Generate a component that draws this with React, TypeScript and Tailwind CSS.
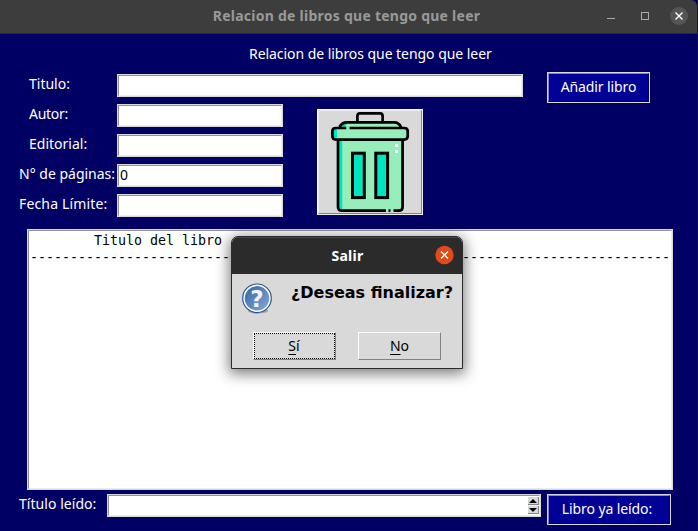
import type { ReactNode } from "react";

const SANS = "font-['Noto_Sans','DejaVu_Sans',sans-serif]";

function Entry({ className, children }: { className: string; children?: ReactNode }) {
  return (
    <div className={`h-[23px] shrink-0 border border-[#d9d9d9] ${className}`}>
      <div className="flex h-full border border-t-[#929292] border-l-[#929292] border-r-[#ececec] border-b-[#ececec] bg-white text-black">
        {children}
      </div>
    </div>
  );
}

function NavyButton({ className, children }: { className: string; children: ReactNode }) {
  return (
    <button className={`h-[31px] shrink-0 border border-[#d9d9d9] tracking-[-0.1px] ${className}`}>
      <span className="flex h-full items-center justify-center border border-t-[#8282d8] border-l-[#8282d8] border-r-[#00004d] border-b-[#00004d] bg-[#000096] pb-[2px] whitespace-nowrap">
        {children}
      </span>
    </button>
  );
}

function Field({ label, className, value }: { label: string; className: string; value?: string }) {
  return (
    <div className="flex h-[30px]">
      <div className={`w-[117px] shrink-0 leading-[20px] whitespace-nowrap ${className}`}>{label}</div>
      <Entry className="w-[166px]">
        {value && <span className="pl-px leading-[17px]">{value}</span>}
      </Entry>
    </div>
  );
}

function TrashIcon() {
  return (
    <svg width="104" height="104" viewBox="0 0 104 104" fill="none">
      <path d="M20 28H84.6V98Q84.6 100.7 81.6 100.7H23Q20 100.7 20 98Z" fill="#97eebb" />
      <path d="M20 28H24.3V100.7H23Q20 100.7 20 98Z" fill="#00e5bf" />
      <path d="M21.5 18Q24 12.3 30 12.3H75Q81 12.3 83 18Z" fill="#97eebb" />
      <path d="M21.5 18Q24 12.3 30 12.3L26.5 18Z" fill="#00e5bf" />
      <rect x="14.4" y="18" width="75.3" height="11.3" rx="3" fill="#97eebb" />
      <path d="M17.4 18H19V29.3H17.4Q14.4 29.3 14.4 26.3V21Q14.4 18 17.4 18Z" fill="#00e5bf" />
      <path
        d="M21.5 17Q24 12.3 29 12.3H76Q81 12.3 83 17M39.4 12V6Q39.4 3.3 42 3.3H62Q64.6 3.3 64.6 6V12M28.3 18H18Q14.4 18 14.4 21V26.3Q14.4 29.6 18 29.6H86Q89.7 29.6 89.7 26.3V21Q89.7 18 86 18H31.5M20 30V97Q20 100.7 24 100.7H68M75.5 100.7H81Q84.6 100.7 84.6 97V30M70.5 100.7H72.5"
        stroke="#000"
        strokeWidth="2.7"
      />
      <rect x="34.5" y="43.2" width="11.8" height="44.4" fill="#00e5bf" stroke="#000" strokeWidth="3" />
      <rect x="57.8" y="43.2" width="11.8" height="44.4" fill="#00e5bf" stroke="#000" strokeWidth="3" />
      <path d="M77 34h3v3h-3zM77 40h3v3h-3z" fill="#fff" />
    </svg>
  );
}

function QuestionIcon() {
  return (
    <svg width="32" height="32" viewBox="0 0 32 32">
      <defs>
        <linearGradient id="disc" x1="0" y1="0" x2="1" y2="1">
          <stop offset="0" stopColor="#3465a4" />
          <stop offset="1" stopColor="#86aad6" />
        </linearGradient>
      </defs>
      <ellipse cx="17" cy="28" rx="10" ry="2.6" fill="#000" opacity="0.25" />
      <circle cx="16" cy="15.3" r="14.3" fill="#fff" stroke="#2a5594" strokeWidth="1.2" />
      <circle cx="16" cy="15.3" r="12.2" fill="url(#disc)" />
      <text x="16" y="23.5" textAnchor="middle" fontSize="23" fontWeight="bold" fontFamily="DejaVu Sans" fill="#f2f2f2">
        ?
      </text>
    </svg>
  );
}

function Spinner() {
  return (
    <div className="ml-auto flex w-[11px] flex-col gap-px py-px">
      <div className="flex h-[8px] items-center justify-center border-r border-b border-[#828282] bg-[#d9d9d9]">
        <svg width="8" height="4"><path d="M0 4L4 0L8 4Z" /></svg>
      </div>
      <div className="flex h-[8px] items-center justify-center border-r border-b border-[#828282] bg-[#d9d9d9]">
        <svg width="8" height="4"><path d="M0 0L4 4L8 0Z" /></svg>
      </div>
    </div>
  );
}

function ExitDialog() {
  return (
    <div className="absolute top-[236px] left-[231px] flex h-[133px] w-[232px] flex-col overflow-hidden rounded-t-[7px] border border-[#2b2b2b] bg-[#d9d9d9] text-black shadow-[0_3px_14px_2px_rgba(0,0,0,0.5)]">
      <div className="flex h-[37px] shrink-0 items-center border-t border-[#454545] bg-[#2b2b2b]">
        <div className="-mt-[2px] w-[203px] pl-[28px] text-center text-[14px] font-bold tracking-[0.3px] text-white">Salir</div>
        <svg width="20" height="20" viewBox="0 0 20 20" className="-mt-[3px]">
          <circle cx="9.5" cy="10" r="9.2" fill="#e04b18" />
          <path d="M6 6.5L13 13.5M13 6.5L6 13.5" stroke="#fff" strokeWidth="1.4" />
        </svg>
      </div>
      <div className="flex h-[58px] pt-[9px] pl-[9px]">
        <QuestionIcon />
        <div className="ml-[18px] font-['DejaVu_Sans',sans-serif] text-[16px] leading-[19px] font-bold whitespace-nowrap">
          ¿Deseas finalizar?
        </div>
      </div>
      <div className="flex gap-[22px] pl-[21px]">
        <button className="h-[28px] w-[83px] border border-t-white border-l-white border-r-[#828282] border-b-[#828282]">
          <span className="flex h-full items-center justify-center border border-dotted border-black pr-px pb-[2px]">
            <span><span className="underline underline-offset-[3px]">S</span>í</span>
          </span>
        </button>
        <button className="flex h-[28px] w-[83px] items-center justify-center border border-t-white border-l-white border-r-[#828282] border-b-[#828282] pb-[2px]">
          <span><span className="underline underline-offset-[3px]">N</span>o</span>
        </button>
      </div>
    </div>
  );
}

export default function App() {
  return (
    <div className={`relative flex h-[531px] w-[698px] flex-col overflow-hidden border-r border-[#17171c] bg-[#000064] text-[14px] text-white ${SANS}`}>
      <header className="flex h-[34px] shrink-0 items-center rounded-tr-[6px] border-b border-[#2b2b2b] bg-[#3d3d3d] text-[#999]">
        <div className="-mt-[2px] w-[605px] pl-[88px] text-center text-[14px] font-bold tracking-[0.25px] whitespace-nowrap">
          Relacion de libros que tengo que leer
        </div>
        <svg width="90" height="32" viewBox="605 0 90 32" fill="none">
          <path d="M607 17.5H615" stroke="#aaa" />
          <rect x="641.5" y="11.5" width="7" height="7" stroke="#aaa" />
          <circle cx="679" cy="15" r="9" fill="#555" />
          <path d="M675.5 11.5L682.5 18.5M682.5 11.5L675.5 18.5" stroke="#fff" strokeWidth="1.4" />
        </svg>
      </header>

      <main className="flex flex-col">
        <div className="h-[38px] pt-[10px] pl-[249px] leading-[20px] tracking-[-0.05px]">Relacion de libros que tengo que leer</div>
        <div className="flex h-[32px]">
          <div className="w-[117px] shrink-0 pt-[2px] pl-[29px] leading-[20px]">Titulo:</div>
          <Entry className="mt-[2px] w-[406px]" />
          <NavyButton className="ml-[24px] w-[103px]">Añadir libro</NavyButton>
        </div>
        <div className="flex h-[125px]">
          <div className="flex flex-col">
            <Field label="Autor:" className="pl-[29px] tracking-[-0.3px]" />
            <Field label="Editorial:" className="pl-[29px]" />
            <Field label="N° de páginas:" className="pl-[19px]" value="0" />
            <Field label="Fecha Límite:" className="pl-[19px] tracking-[0.15px]" />
          </div>
          <div className="mt-[5px] ml-[34px] h-[106px] w-[106px] border border-t-white border-l-white border-r-[#ececec] border-b-[#ececec] bg-[#d9d9d9]">
            <div className="h-full w-full border border-t-[#ececec] border-l-[#ececec] border-r-[#828282] border-b-[#828282]">
              <div className="-mt-px -ml-px">
                <TrashIcon />
              </div>
            </div>
          </div>
        </div>
        <div className="ml-[27px] h-[261px] w-[646px] border border-[#d9d9d9]">
          <pre className="h-full overflow-hidden border border-t-[#929292] border-l-[#929292] border-r-[#ececec] border-b-[#ececec] bg-white pt-px pl-px font-['DejaVu_Sans_Mono',monospace] text-[13.33px] leading-[17px] tracking-[-0.025px] text-black">
            {"        Titulo del libro\n" + "-".repeat(80)}
          </pre>
        </div>
        <div className="flex pt-[4px]">
          <div className="w-[107px] shrink-0 pl-[19px] leading-[20px] tracking-[0.05px]">Título leído:</div>
          <Entry className="w-[434px]">
            <Spinner />
          </Entry>
          <NavyButton className="ml-[6px] w-[124px]"><span className="-ml-[4px]">Libro ya leído:</span></NavyButton>
        </div>
      </main>

      <ExitDialog />
    </div>
  );
}
